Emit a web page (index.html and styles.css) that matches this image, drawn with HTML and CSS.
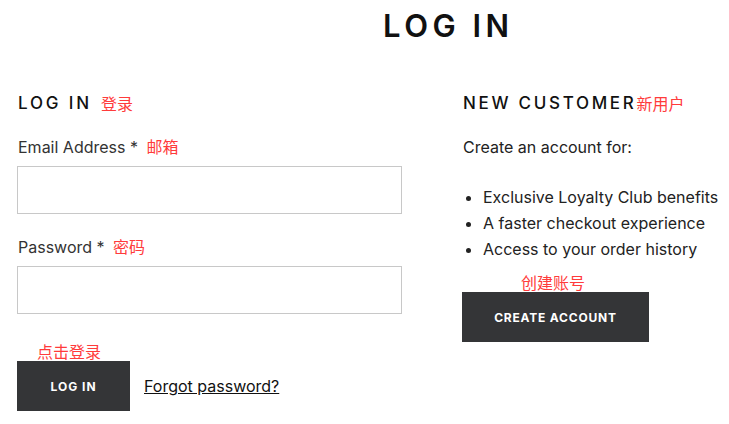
FILE: index.html
```html
<!DOCTYPE html>
<html>
<head>
<meta charset="utf-8">
<link rel="stylesheet" href="styles.css">
</head>
<body>
<h1 class="page-title">LOG IN</h1>
<div class="columns">
  <section class="col col-login">
    <h2 class="section-title">LOG IN<span class="note note-title">登录</span></h2>
    <label class="field-label">Email Address * <span class="note note-label">邮箱</span></label>
    <div class="input"></div>
    <label class="field-label">Password * <span class="note note-label">密码</span></label>
    <div class="input"></div>
    <div class="note note-btn">点击登录</div>
    <div class="actions">
      <button class="btn btn-login">LOG IN</button>
      <a class="forgot">Forgot password?</a>
    </div>
  </section>
  <section class="col col-new">
    <h2 class="section-title section-title-new">NEW CUSTOMER<span class="note">新用户</span></h2>
    <p class="intro">Create an account for:</p>
    <ul class="benefits">
      <li>Exclusive Loyalty Club benefits</li>
      <li>A faster checkout experience</li>
      <li>Access to your order history</li>
    </ul>
    <div class="note note-create">创建账号</div>
    <button class="btn btn-create">CREATE ACCOUNT</button>
  </section>
</div>
</body>
</html>
```
FILE: styles.css
```css
* { box-sizing: border-box; }
body {
  margin: 0;
  background: #fff;
  font-family: "Inter", "Liberation Sans", "Noto Sans CJK SC", sans-serif;
  color: #222;
  width: 729px;
  height: 424px;
  overflow: hidden;
}
.page-title {
  margin: 0;
  padding: 8px 0 0 383px;
  font-size: 31px;
  line-height: 36px;
  font-weight: 600;
  letter-spacing: 4.5px;
  color: #111;
}
.columns {
  display: flex;
  padding: 48px 0 0 17px;
}
.col-login { width: 385px; }
.col-new { margin-left: 61px; }
.section-title {
  margin: 0 0 0 1px;
  font-size: 17px;
  line-height: 22px;
  font-weight: 500;
  letter-spacing: 2.85px;
  color: #111;
  display: flex;
  align-items: center;
}
.section-title-new {
  margin-left: 0;
  letter-spacing: 2.7px;
}
.note {
  font-family: "Noto Sans CJK SC", sans-serif;
  color: #ff3b3b;
  font-size: 16px;
  line-height: 20px;
  letter-spacing: 0;
  font-weight: 400;
}
.note-title { margin-left: 9px; }
.field-label {
  display: block;
  margin: 22px 0 0 1px;
  font-size: 16px;
  line-height: 22px;
  height: 22px;
  color: #333;
}
.note-label { margin-left: 4px; }
.input {
  margin-top: 8px;
  height: 48px;
  border: 1px solid #c8c8c8;
}
.note-btn {
  margin: 27px 0 0 20px;
  line-height: 20px;
}
.actions {
  display: flex;
  align-items: center;
}
.btn {
  border: 0;
  background: #343537;
  color: #fff;
  font-family: "Inter", "Liberation Sans", sans-serif;
  font-weight: 700;
  font-size: 12px;
  letter-spacing: 1px;
  height: 50px;
}
.btn-login { width: 113px; }
.forgot {
  margin-left: 14px;
  font-size: 16px;
  color: #111;
  text-decoration: underline;
}
.intro {
  margin: 22px 0 0;
  font-size: 16px;
  line-height: 22px;
  color: #222;
}
.benefits {
  margin: 26px 0 0;
  padding-left: 20px;
  font-size: 16px;
  line-height: 26px;
  color: #222;
}
.note-create {
  margin: 11px 0 0 58px;
  line-height: 19px;
}
.btn-create {
  width: 187px;
  margin-left: -1px;
  letter-spacing: 0.8px;
}
```
